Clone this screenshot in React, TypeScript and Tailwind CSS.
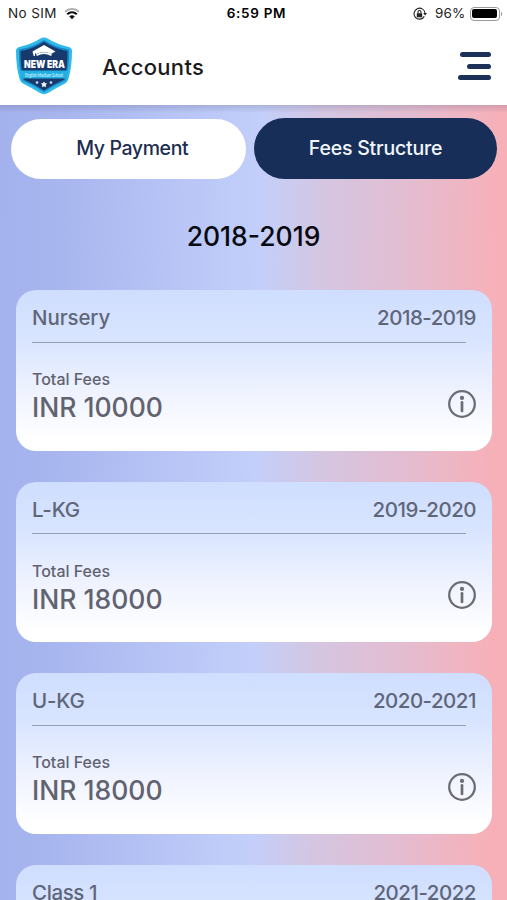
import React from "react";

const fees = [
  { name: "Nursery", nameClass: "tracking-[-0.1px]", year: "2018-2019", amount: "INR 10000" },
  { name: "L-KG", nameClass: "tracking-[-0.2px]", year: "2019-2020", amount: "INR 18000" },
  { name: "U-KG", nameClass: "tracking-[-0.2px]", year: "2020-2021", amount: "INR 18000" },
  { name: "Class 1", nameClass: "tracking-[-0.4px]", year: "2021-2022", amount: "INR 20000" },
];

function Wifi() {
  return (
    <svg width="16" height="12" viewBox="0 0 16 12" fill="none">
      <path d="M1 3.800C5 0 11 0 15 3.800" stroke="#aaa" strokeWidth="1.800" />
      <path d="M3.200 6.200C6 3.700 10 3.700 12.800 6.200" stroke="#111" strokeWidth="2.200" />
      <path d="M5.200 8.300C7 6.900 9 6.900 10.800 8.300L8 11.200Z" fill="#111" />
    </svg>
  );
}

function RotationLock() {
  return (
    <svg width="14" height="14" viewBox="0 0 14 14" fill="none">
      <path d="M11.300 9.400A5.500 5.500 0 1 1 12 6" stroke="#222" strokeWidth="1.100" />
      <path d="M10.200 6h3.800L12.100 8.600Z" fill="#222" />
      <rect x="3.800" y="6.200" width="5.400" height="4" rx=".5" fill="#222" />
      <path d="M5 6.400V5a1.500 1.500 0 0 1 3 0v1.400" stroke="#222" strokeWidth="1.100" />
    </svg>
  );
}

function Logo() {
  return (
    <svg width="58" height="58" viewBox="0 0 58 58" className="block">
      <path d="M29 .5 Q31 .5 33 1.800 Q42 7.500 54 10 Q57 11 57 14 Q57 29 53.500 42 Q52.500 45 50 46.500 Q41 51 33 56 Q29 58.300 25 56 Q17 51 8 46.500 Q5.500 45 4.500 42 Q1 29 1 14 Q1 11 4 10 Q16 7.500 25 1.800 Q27 .5 29 .5Z" fill="#2fb9ea" />
      <path d="M29 3 Q40 10.500 54 12.500 Q54.500 29 50.500 43.500 Q38 49 29 55 Q20 49 7.500 43.500 Q3.500 29 4 12.500 Q18 10.500 29 3Z" fill="#1785c4" />
      <path d="M29 4.800 Q40 12 52.300 14 Q53 29 49 42.500 Q38 47.500 29 53.500 Q20 47.500 9 42.500 Q5 29 5.700 14 Q18 12 29 4.800Z" fill="#18396b" />
      <path d="M4.500 33.500H53.500L51.500 41.500H6.500Z" fill="#22aee2" />
      <path d="M17.500 14.500 29 8 40.500 14.500 36 17Q29 13 21.500 17L20 16.200V19H18.700Z" fill="#fff" />
      <path d="M21.500 18.200Q29 14 36.500 18.200" stroke="#fff" strokeWidth="1.800" fill="none" />
      <text x="29.500" y="31" textAnchor="middle" textLength="41" lengthAdjust="spacingAndGlyphs" fontFamily="Inter, sans-serif" fontWeight="900" fontSize="10.500" fill="#fff">NEW ERA</text>
      <text x="29" y="39.500" textAnchor="middle" textLength="38" lengthAdjust="spacingAndGlyphs" fontFamily="Lato, sans-serif" fontWeight="700" fontSize="5" fill="#c2eefb">English Medium School</text>
      <circle cx="22" cy="45.500" r="1.300" fill="#cfe0f2" />
      <path d="m29 45 .8 1.500 1.800.2-1.300 1.200.4 1.900-1.700-.9-1.700.9.4-1.900-1.300-1.200 1.800-.2Z" fill="#fff" stroke="#fff" strokeWidth=".6" />
      <circle cx="36" cy="45.500" r="1.300" fill="#cfe0f2" />
    </svg>
  );
}

function InfoIcon() {
  return (
    <svg width="28" height="28" viewBox="0 0 28 28" fill="none" className="block">
      <circle cx="14" cy="14" r="12.800" stroke="#6b6c75" strokeWidth="2.300" />
      <circle cx="14" cy="7.900" r="2.100" fill="#6b6c75" />
      <path d="M14 12.300V21" stroke="#6b6c75" strokeWidth="2.700" strokeLinecap="round" />
    </svg>
  );
}

export default function App() {
  return (
    <div className="flex h-[900px] w-[507px] flex-col overflow-hidden bg-white font-['Inter',sans-serif]">
      <header className="h-[105px] shrink-0">
        <div className="grid h-[27px] grid-cols-3 items-center text-[13.500px] text-[#222]">
          <div className="flex items-center gap-[7px] pl-2">
            <span className="tracking-[0.4px]">No SIM</span>
            <Wifi />
          </div>
          <div className="pl-[6px] text-center font-semibold tracking-[0.7px] text-black">6:59 PM</div>
          <div className="flex items-center justify-end pr-[5px]">
            <RotationLock />
            <span className="ml-[8px] tracking-[0.2px]">96%</span>
            <div className="ml-[4px] h-[14px] w-[30px] rounded-[4px] border border-[#999] p-[1.500px]">
              <div className="h-full rounded-[2px] bg-black" />
            </div>
            <div className="ml-px h-[4px] w-[1.500px] rounded-r bg-[#999]" />
          </div>
        </div>
        <div className="flex items-start pl-[15px] pr-[16px] pt-[10px]">
          <Logo />
          <h1 className="ml-[29px] mt-[15px] text-[22px] leading-[30px] font-medium tracking-[0.3px] text-[#1b1b1d]">Accounts</h1>
          <div className="ml-auto mt-[15px] flex flex-col items-end gap-[6.500px]">
            <div className="h-[5px] w-[31.500px] rounded-full bg-[#1b3158]" />
            <div className="h-[5px] w-[24.500px] rounded-full bg-[#1b3158]" />
            <div className="h-[5px] w-[33px] rounded-full bg-[#1b3158]" />
          </div>
        </div>
      </header>

      <main className="flex-1 bg-[linear-gradient(91deg,#a3b1ed_0%,#a8b6ef_12%,#c3cffa_50%,#d4c6e2_62%,#e3bdd1_78%,#f7b0b8_96%)]">
        <div className="h-[8px] bg-gradient-to-b from-[#55557738] to-transparent" />
        <div className="-mt-px flex gap-[8px] pl-[10.500px] pr-[10px]">
          <button className="mt-[7px] h-[60px] w-[235.500px] rounded-full bg-white pb-px pl-[8px] text-[19.500px] font-medium tracking-[-0.4px] text-[#1c2d51]">My Payment</button>
          <button className="mt-[6px] h-[60.500px] w-[243px] rounded-full bg-[#172f58] pt-px text-[19.500px] font-medium tracking-[-0.200px] text-[#f2f6fb]">Fees Structure</button>
        </div>
        <h2 className="mt-[41px] text-center text-[26.500px] leading-[32px] font-medium text-[#080a10]">2018-2019</h2>
        <div className="mt-[38px] flex flex-col gap-[31px] pl-[16px] pr-[15.500px]">
          {fees.map((fee) => (
            <section key={fee.name} className="h-[160.500px] shrink-0 rounded-[20px] bg-[linear-gradient(180deg,#cfdeff_0%,#d9e5ff_32%,#f1f4ff_66%,#ffffff_94%)] pl-[16px] pr-[15.500px] pt-[15.500px] text-[#62636f]">
              <div className="flex h-[26px] items-center justify-between text-[20.500px] font-medium text-[#60667a]">
                <span className={fee.nameClass}>{fee.name}</span>
                <span className="tracking-[-0.5px]">{fee.year}</span>
              </div>
              <div className="mt-[10px] mr-[10px] h-px bg-[#98a1b4]" />
              <div className="mt-[25.500px] flex justify-between">
                <div>
                  <div className="text-[16px] leading-[22px] font-medium">Total Fees</div>
                  <div className="text-[26.500px] leading-[34px] font-medium">{fee.amount}</div>
                </div>
                <div className="mt-[21.500px]">
                  <InfoIcon />
                </div>
              </div>
            </section>
          ))}
        </div>
      </main>
    </div>
  );
}
